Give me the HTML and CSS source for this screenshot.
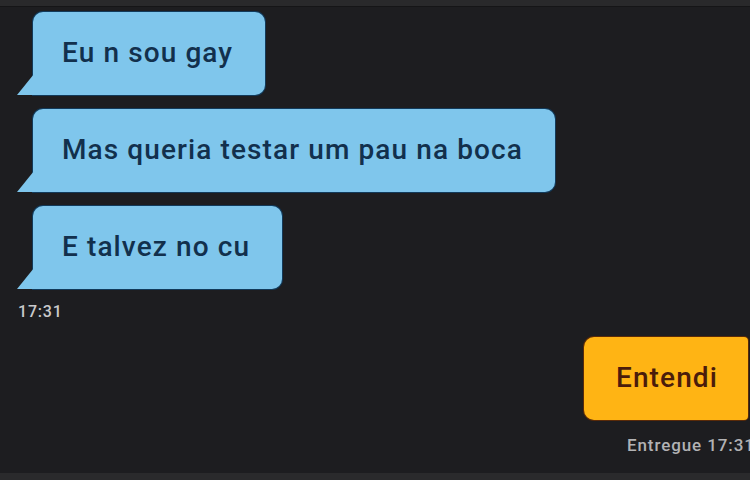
FILE: index.html
```html
<!DOCTYPE html>
<html lang="pt">
<head>
<meta charset="utf-8">
<link rel="stylesheet" href="styles.css">
</head>
<body>
<div class="topbar"></div>
<main class="chat">
  <div class="group incoming">
    <div class="bubble blue">Eu n sou gay</div>
    <div class="bubble blue">Mas queria testar um pau na boca</div>
    <div class="bubble blue">E talvez no cu</div>
    <div class="time">17:31</div>
  </div>
  <div class="group outgoing">
    <div class="bubble orange">Entendi</div>
    <div class="status">Entregue 17:31</div>
  </div>
</main>
<div class="bottombar"></div>
</body>
</html>
```
FILE: styles.css
```css
html, body {
  margin: 0;
  padding: 0;
  background: #1d1d20;
  width: 750px;
  height: 480px;
  overflow: hidden;
  font-family: Roboto, "DejaVu Sans", sans-serif;
}
.topbar {
  height: 6px;
  background: #29292b;
  border-bottom: 1px solid #151517;
}
.chat {
  display: flex;
  flex-direction: column;
  height: 466px;
  padding-top: 5px;
  box-sizing: border-box;
}
.group {
  display: flex;
  flex-direction: column;
}
.incoming {
  align-items: flex-start;
  gap: 14px;
  padding-left: 33px;
}
.bubble {
  position: relative;
  height: 83px;
  box-sizing: border-box;
  display: flex;
  align-items: center;
  font-size: 28px;
  font-weight: 500;
  letter-spacing: 1.1px;
}
.blue {
  background: #7fc6ec;
  color: #12304d;
  padding: 0 32px 2px 29px;
  border-radius: 10px 10px 10px 0;
  box-shadow: 0 0 0 1px #123a5a;
}
.blue::before {
  content: "";
  position: absolute;
  left: -16px;
  bottom: 0;
  width: 0;
  height: 0;
  border-style: solid;
  border-width: 0 0 21px 17px;
  border-color: transparent transparent #7fc6ec transparent;
}
.time {
  margin-left: -15px;
  margin-top: 0;
  color: #c9c9cb;
  font-size: 16px;
  font-weight: 500;
  letter-spacing: 0.8px;
  line-height: 18px;
}
.outgoing {
  margin-top: 16px;
  align-items: flex-end;
  padding-right: 2px;
}
.orange {
  background: #ffb414;
  color: #4b1c0b;
  padding: 0 26px 2px 32px;
  border-radius: 10px 4px 4px 10px;
  box-shadow: 0 0 0 1px #5a2a08;
  width: 164px;
}
.status {
  margin-top: 15px;
  margin-right: -20px;
  color: #b2b2b4;
  font-size: 17px;
  font-weight: 500;
  letter-spacing: 0.9px;
  line-height: 20px;
  width: 141px;
  overflow: hidden;
  white-space: nowrap;
  align-self: flex-end;
}
.bottombar {
  height: 8px;
  background: #2a2a2c;
}
```
